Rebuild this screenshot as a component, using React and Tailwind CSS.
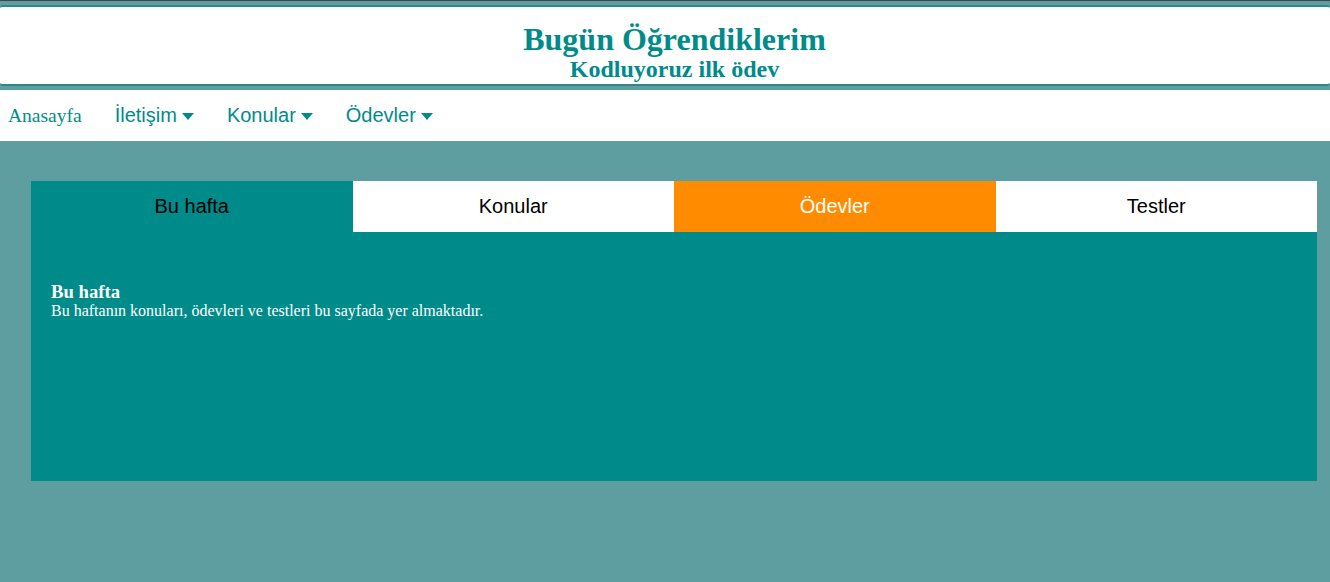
import React from 'react';

const Caret = () => (
    <svg width="12" height="7" viewBox="0 0 12 7" className="ml-[5px] mt-[2px]">
        <path d="M0 0 L12 0 L6 7 Z" fill="#008b8b" />
    </svg>
);

const App = () => {
    const tabs = [
        { label: 'Bu hafta', cls: 'bg-[#008b8b] text-black' },
        { label: 'Konular', cls: 'bg-white text-black' },
        { label: 'Ödevler', cls: 'bg-[#ff8c00] text-white' },
        { label: 'Testler', cls: 'bg-white text-black' },
    ];

    return (
        <div className="min-h-[582px] bg-[#5f9ea0] border-t border-[#444]">
            {/* header */}
            <div className="pt-[4px]">
                <div className="bg-white border-y-2 border-[#2a8a88] rounded-[3px] h-[81px] flex flex-col items-center pl-[19px] pt-[15px] text-[#008b8b] font-['Liberation_Serif',serif] font-bold">
                    <h1 className="text-[32px] leading-[34px]">Bugün Öğrendiklerim</h1>
                    <h2 className="text-[24px] leading-[26px]">Kodluyoruz ilk ödev</h2>
                </div>
            </div>

            {/* nav */}
            <div className="mt-[4px] bg-white h-[51px] flex items-center text-[#008b8b]">
                <a className="ml-[8px] font-['Liberation_Serif',serif] text-[19.5px]">Anasayfa</a>
                {['İletişim', 'Konular', 'Ödevler'].map((item) => (
                    <div key={item} className="ml-[33px] flex items-center font-['Liberation_Sans',sans-serif] text-[20px] -mt-[1px]">
                        <span>{item}</span>
                        <Caret />
                    </div>
                ))}
            </div>

            {/* tabs */}
            <div className="mt-[40px] ml-[31px] mr-[13px] bg-[#008b8b] h-[300px]">
                <div className="grid grid-cols-4 h-[51px] font-['Liberation_Sans',sans-serif] text-[20px]">
                    {tabs.map((t) => (
                        <div key={t.label} className={`flex items-center justify-center pb-[1px] ${t.cls}`}>
                            {t.label}
                        </div>
                    ))}
                </div>
                <div className="px-[20px] pt-[49px] text-white font-['Liberation_Serif',serif]">
                    <h3 className="font-bold text-[18.7px] leading-[21px]">Bu hafta</h3>
                    <p className="text-[16px] leading-[18px]">Bu haftanın konuları, ödevleri ve testleri bu sayfada yer almaktadır.</p>
                </div>
            </div>
        </div>
    );
};

export default App;
